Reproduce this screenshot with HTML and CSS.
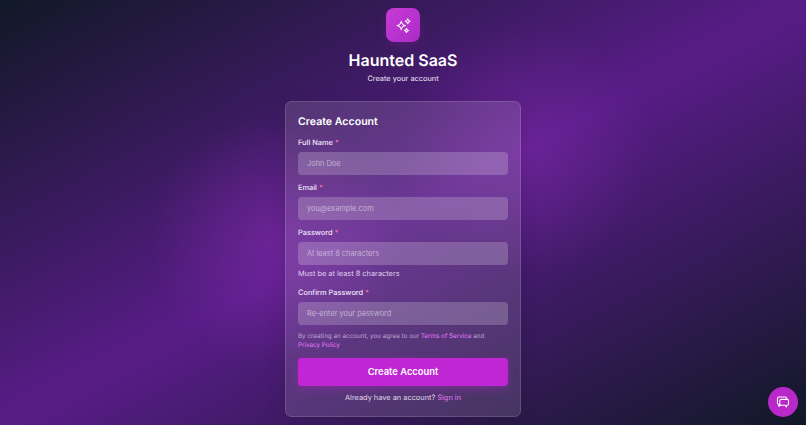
FILE: index.html
```html
<!DOCTYPE html>
<html lang="en">
<head>
    <meta charset="UTF-8">
    <meta name="viewport" content="width=device-width, initial-scale=1.0">
    <title>Haunted SaaS - Create Account</title>
    <link rel="stylesheet" href="styles.css">
</head>
<body>
    <div class="page">
        <div class="logo">
            <svg width="17" height="17" viewBox="0 0 24 24" fill="none" stroke="currentColor" stroke-width="1.5" stroke-linecap="round" stroke-linejoin="round">
                <path d="M8.8 6 Q9.6 11.2 14.8 12 Q9.6 12.8 8.8 18 Q8 12.8 2.8 12 Q8 11.2 8.8 6 Z"/>
                <path d="M18 2.5 Q18.5 5.5 21.5 6 Q18.5 6.5 18 9.5 Q17.5 6.5 14.5 6 Q17.5 5.5 18 2.5 Z"/>
                <path d="M16.2 16 Q16.6 18.6 19.2 19 Q16.6 19.4 16.2 22 Q15.8 19.4 13.2 19 Q15.8 18.6 16.2 16 Z"/>
            </svg>
        </div>
        <h1>Haunted SaaS</h1>
        <p class="subtitle">Create your account</p>

        <form class="card" action="#" method="POST">
            <h2>Create Account</h2>

            <div class="form-group">
                <label for="name">Full Name <span class="required">*</span></label>
                <input type="text" id="name" placeholder="John Doe">
            </div>

            <div class="form-group">
                <label for="email">Email <span class="required">*</span></label>
                <input type="email" id="email" placeholder="you@example.com">
            </div>

            <div class="form-group">
                <label for="password">Password <span class="required">*</span></label>
                <input type="password" id="password" placeholder="At least 8 characters">
                <div class="hint">Must be at least 8 characters</div>
            </div>

            <div class="form-group">
                <label for="confirm">Confirm Password <span class="required">*</span></label>
                <input type="password" id="confirm" placeholder="Re-enter your password">
            </div>

            <p class="terms">By creating an account, you agree to our <a href="#">Terms of Service</a> and <a href="#">Privacy Policy</a></p>

            <button type="submit">Create Account</button>

            <p class="signin">Already have an account? <a href="#">Sign in</a></p>
        </form>
    </div>

    <button class="chat" type="button" aria-label="Chat">
        <svg width="14" height="14" viewBox="0 0 24 24" fill="none" stroke="currentColor" stroke-width="1.8" stroke-linecap="round" stroke-linejoin="round">
            <path d="M5 16 C3.5 16 2.5 15 2.5 13.5 V6 C2.5 4.5 3.5 3.5 5 3.5 H16 C17.5 3.5 18.5 4.5 18.5 6 V7.5"/>
            <path d="M9 7.5 H19 C20.5 7.5 21.5 8.5 21.5 10 V15 C21.5 16.5 20.5 17.5 19 17.5 H18 V20.5 L15 17.5 H9 C7.5 17.5 6.5 16.5 6.5 15 V10 C6.5 8.5 7.5 7.5 9 7.5 Z"/>
            <path d="M5 16 V19.5 L7.5 17.5"/>
        </svg>
    </button>
</body>
</html>
```

FILE: styles.css
```css
* {
    box-sizing: border-box;
}

html, body {
    height: 100%;
}

body {
    margin: 0;
    overflow: hidden;
    font-family: Inter, "Noto Sans", sans-serif;
    text-rendering: geometricPrecision;
    color: #fff;
    background-color: #4a1d7a;
    background-image:
        radial-gradient(circle 125px at 275px 240px, rgba(150, 50, 190, 0.38), rgba(150, 50, 190, 0)),
        radial-gradient(circle 125px at 525px 150px, rgba(150, 50, 190, 0.3), rgba(150, 50, 190, 0)),
        linear-gradient(to bottom right, #111827, #581c87, #111827);
}

.page {
    display: flex;
    flex-direction: column;
    align-items: center;
    padding-top: 8px;
}

.logo {
    display: flex;
    align-items: center;
    justify-content: center;
    width: 34px;
    height: 34px;
    border-radius: 8px;
    background: linear-gradient(135deg, #c93ad6, #a92cc8);
    box-shadow: 0 4px 10px rgba(192, 38, 211, 0.15);
}

h1 {
    margin: 8px 0 0;
    font-size: 16px;
    line-height: 20px;
    font-weight: 600;
}

.subtitle {
    margin: 2.5px 0 0;
    font-size: 7.4px;
    line-height: 12px;
    color: #f0e6f8;
}

.card {
    width: 236px;
    height: 316px;
    margin-top: 16.5px;
    padding: 13px 12px 0;
    border: 1px solid rgba(255, 255, 255, 0.14);
    border-radius: 6.5px;
    background-color: rgba(255, 255, 255, 0.12);
    box-shadow: 0 6px 20px rgba(0, 0, 0, 0.1);
}

h2 {
    margin: 0 0 9px;
    font-size: 10.6px;
    line-height: 14px;
    font-weight: 600;
}

.form-group {
    margin-bottom: 8.5px;
}

label {
    display: block;
    margin-bottom: 4px;
    font-size: 7.4px;
    line-height: 10px;
    font-weight: 500;
    color: #f3e8ff;
}

.required {
    color: #f472b6;
}

input {
    display: block;
    width: 100%;
    height: 22.7px;
    padding: 0 9px;
    border: none;
    border-radius: 4px;
    background-color: rgba(255, 255, 255, 0.2);
    font-family: inherit;
    font-size: 7.4px;
    color: #fff;
}

input::placeholder {
    color: rgba(255, 255, 255, 0.5);
}

.hint {
    margin-top: 2.5px;
    font-size: 7.4px;
    line-height: 12px;
    color: #e0d0ee;
}

.terms {
    margin: -0.8px 0 0;
    font-size: 6.3px;
    line-height: 8.5px;
    color: #bda6d0;
}

.card a {
    color: #e879f9;
    text-decoration: none;
}

.card button {
    display: block;
    width: 100%;
    height: 28px;
    margin-top: 8.5px;
    border: none;
    border-radius: 4px;
    background-color: #c026d3;
    box-shadow: 0 3px 8px rgba(192, 38, 211, 0.35);
    font-family: inherit;
    font-size: 9.4px;
    font-weight: 600;
    color: #fff;
}

.signin {
    margin: 6.5px 0 0;
    text-align: center;
    font-size: 7.4px;
    line-height: 12px;
    color: #e4d5f0;
}

.chat {
    position: absolute;
    right: 8px;
    bottom: 8px;
    display: flex;
    align-items: center;
    justify-content: center;
    width: 30px;
    height: 30px;
    padding: 0;
    border: none;
    border-radius: 50%;
    background-color: #b928c9;
    color: #fff;
}
```
